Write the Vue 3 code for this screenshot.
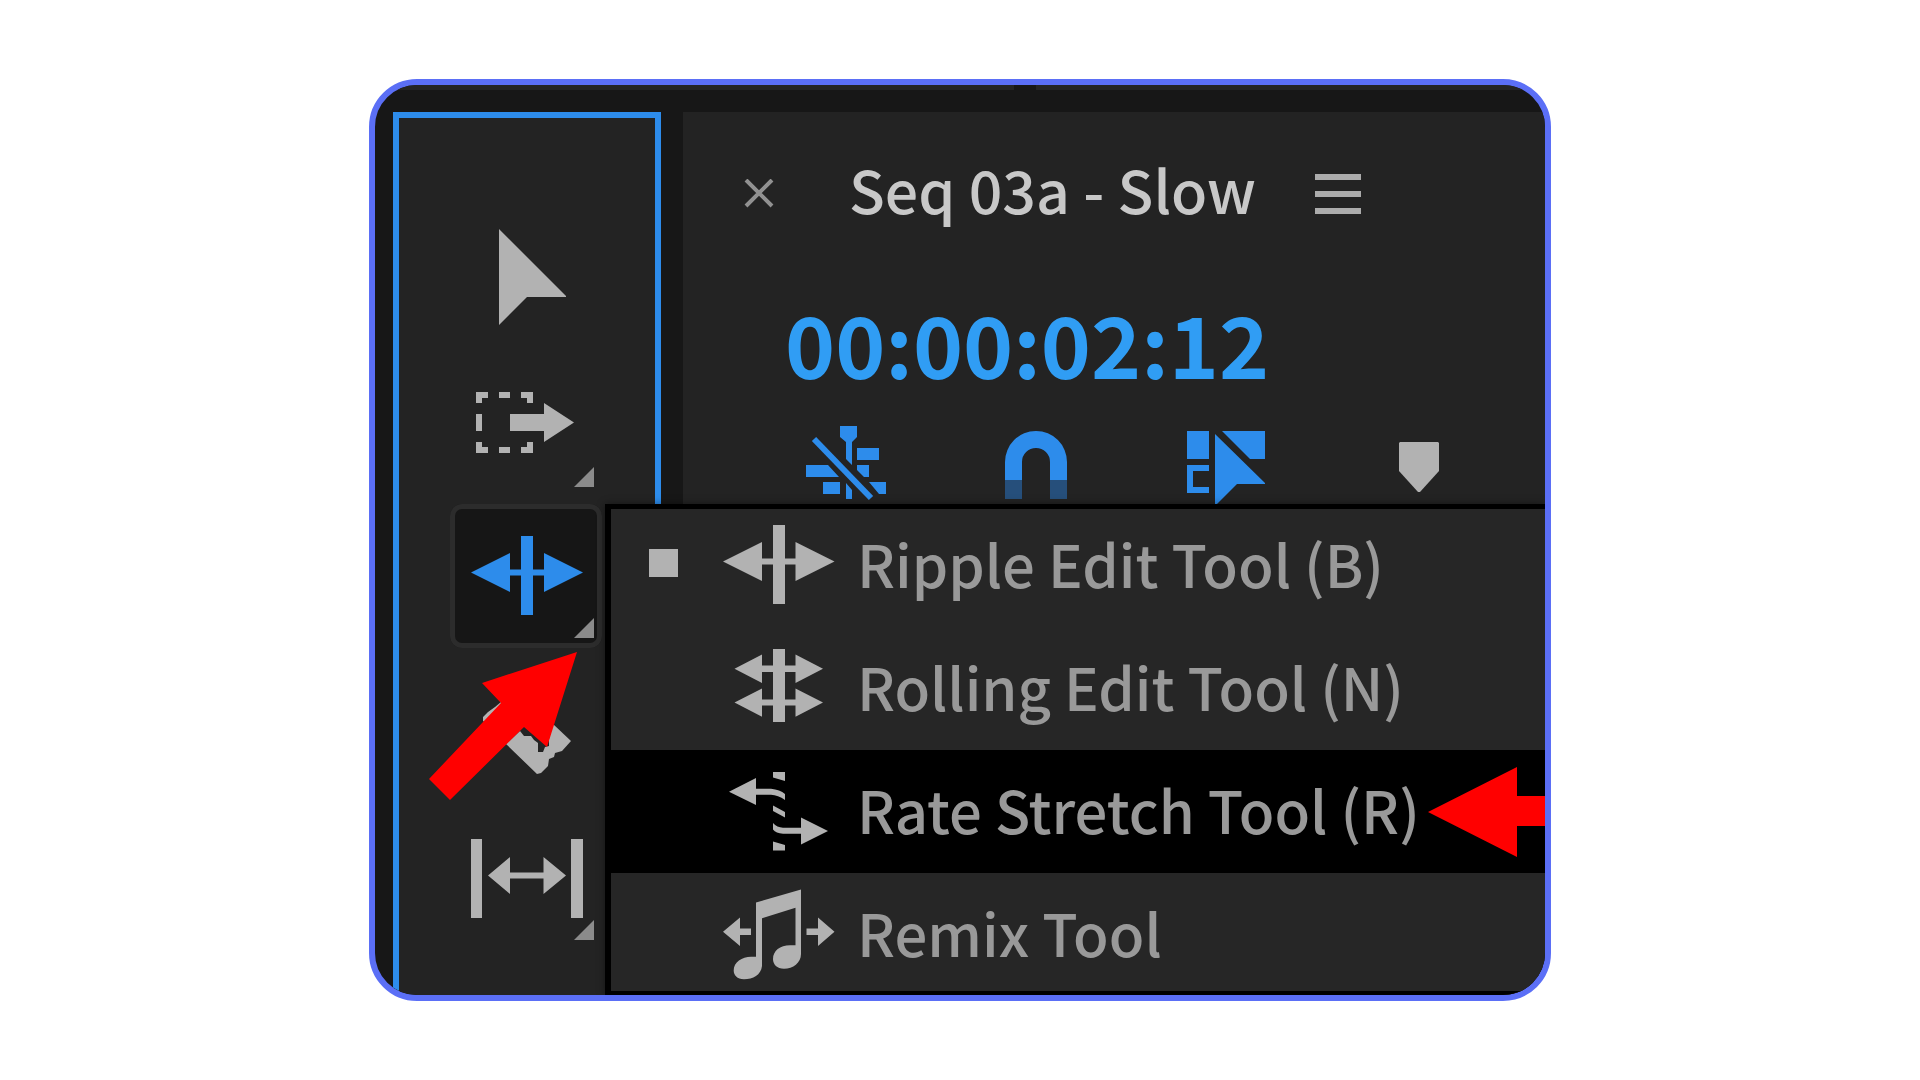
<script setup>
import { ref } from 'vue'

const activeTool = ref('ripple')
const highlighted = ref('rate')

const tools = [
  { id: 'select', label: 'Selection', flyout: false, path: 'M49 27L116 94V95H77L49 123Z' },
  {
    id: 'track',
    label: 'Track Select Forward',
    flyout: true,
    path: 'M26 39H38V45H32V50H26ZM49 39H60V45H49ZM71 39H83V50H77V45H71ZM26 61H32V78H26ZM26 89H32V94H38V100H26ZM49 94H60V100H49ZM77 89H83V100H71V94H77ZM60 61H94V50L124 69.500L94 89V78H60Z'
  },
  {
    id: 'ripple',
    label: 'Ripple Edit',
    flyout: true,
    path: 'M71 32H83V65.500H94V49L133 68.500L94 88V71.500H83V111H71V71.500H60V88L21 68.500L60 49V65.500H71Z'
  },
  {
    id: 'razor',
    label: 'Razor',
    flyout: false,
    path: 'M33 66V62L38 57L45 52L51 47V53L36 68ZM56 89L70 76L74 81H81L84 85L88 88V97H93L95 92L99 91V84L103 69L121 86L112 96L105 98L104 102L99 104L98 111L91 118L87 119Z'
  },
  {
    id: 'slip',
    label: 'Slip',
    flyout: true,
    path: 'M21 33H32V112H21ZM121 33H133V112H121ZM38 69.500L60 51V66.500H93.500V51L116 69.500L93.500 88V72.500H60V88Z'
  }
]

const menuItems = [
  {
    id: 'ripple',
    label: 'Ripple Edit Tool (B)',
    checked: true,
    path: 'M50 21H62V54.500H72.500V38L111.500 57.500L72.500 77V60.500H62V100H50V60.500H39V77L0 57.500L39 38V54.500H50Z'
  },
  {
    id: 'rolling',
    label: 'Rolling Edit Tool (N)',
    checked: false,
    path: 'M50 22H62V38.500H72.500V27.500L100 41.700L72.500 56V45H62V72.500H72.500V61.500L100 75.500L72.500 89.700V78.500H62V95H50V78.500H39V89.700L11.500 75.500L39 61.500V72.500H50V45H39V56L11.500 41.700L39 27.500V38.500H50Z'
  },
  {
    id: 'rate',
    label: 'Rate Stretch Tool (R)',
    checked: false,
    path: 'M50 22H62V31L50 27.500ZM6 41.700L33 28V38.700H48Q57 39.500 62 44V50Q55 45 48 44.700H33V55ZM50 55.500L62 62V67.500L50 61ZM50 73Q54 77.500 60 77.700H78V67.500L105 81L78 94.500V83.700H60Q53 83.500 50 79.500ZM50 91.500L62 95V100.500H50Z'
  },
  {
    id: 'remix',
    label: 'Remix Tool',
    checked: false,
    path: 'M0 58.700L17 44.500V55.500H28V62H17V73ZM83.500 55.500H95V44.500L111.500 58.700L95 73V62H83.500ZM33 29.500L78 16.500V81C78 90 70 95.700 61 95.700C54 95.700 50 91.500 50 86C50 78 57 72.300 67 72.300H72.500V34.700L39 45.300V93C38 102 30 106.300 21 106.300C14 106.300 10.700 102 10.700 97.500C10.700 89 19 83.700 28 83.700H33Z'
  }
]
</script>

<template>
  <main class="page">
    <section class="frame">
      <div class="strip"><span class="strip-left"></span><span class="strip-right"></span></div>

      <div class="workspace">
        <nav class="toolbar" aria-label="Tools">
          <button
            v-for="tool in tools"
            :key="tool.id"
            class="tool"
            :class="{ active: tool.id === activeTool }"
            :aria-label="tool.label"
            type="button"
            @click="activeTool = tool.id"
          >
            <svg viewBox="0 0 152 144" width="152" height="144" aria-hidden="true">
              <path :d="tool.path" fill="currentColor" />
              <path v-if="tool.flyout" d="M144 114V134H124Z" fill="#8b8b8b" />
            </svg>
          </button>
        </nav>

        <section class="timeline">
          <header class="tab">
            <button class="plain" type="button" aria-label="Close sequence">
              <svg viewBox="0 0 30 30" width="30" height="30" aria-hidden="true">
                <path d="M2 1L28 27M28 1L2 27" stroke="#919191" stroke-width="4" />
              </svg>
            </button>
            <h1 class="title">Seq 03a - Slow</h1>
            <button class="plain" type="button" aria-label="Panel menu">
              <svg viewBox="0 0 46 40" width="46" height="40" aria-hidden="true">
                <path d="M0 3H46M0 20H46M0 37H46" stroke="#acacac" stroke-width="6" />
              </svg>
            </button>
          </header>

          <div class="timecode">00:00:02:12</div>

          <div class="options">
            <button class="plain option" type="button" aria-label="Insert as nest">
              <svg viewBox="0 0 80 75" width="80" height="75" aria-hidden="true">
                <path
                  fill="currentColor"
                  d="M34 0H51V11L46 16V39L40 33V16L34 11ZM51 22H73V34H51ZM51 39H63V51H58L51 44ZM0 39H22L33 51H0ZM17 56H34V68H17ZM40 57L46 64V73H40ZM63 56H80V68H73Z"
                />
                <path d="M8 13L65 72" stroke="currentColor" stroke-width="6" />
              </svg>
            </button>
            <button class="plain option" type="button" aria-label="Snap">
              <svg viewBox="0 0 62 75" width="62" height="75" aria-hidden="true">
                <path fill="currentColor" d="M0 54V36A31 31 0 0 1 62 36V54H45V36A14 14 0 0 0 17 36V54Z" />
                <path fill="#264f7b" d="M0 54H17V73H0ZM45 54H62V73H45Z" />
              </svg>
            </button>
            <button class="plain option" type="button" aria-label="Linked selection">
              <svg viewBox="0 0 79 79" width="79" height="79" aria-hidden="true">
                <path
                  fill="currentColor"
                  d="M1 5H23V33H1ZM36 5H79V33H64ZM1 39H23V45H7V61H23V67H1ZM29 8L79 57V58H51L31 78H29Z"
                />
              </svg>
            </button>
            <button class="plain option marker" type="button" aria-label="Add marker">
              <svg viewBox="0 0 40 68" width="40" height="68" aria-hidden="true">
                <path fill="currentColor" d="M1 16H39L40 17V45L21 66H19L0 45V17Z" />
              </svg>
            </button>
          </div>
        </section>
      </div>

      <div class="menu" role="menu">
        <button
          v-for="item in menuItems"
          :key="item.id"
          class="item"
          :class="{ highlighted: item.id === highlighted }"
          role="menuitemradio"
          :aria-checked="item.checked"
          type="button"
          @mouseenter="highlighted = item.id"
        >
          <span class="check" :class="{ on: item.checked }"></span>
          <svg class="item-icon" viewBox="0 0 112 123" width="112" height="123" aria-hidden="true">
            <path :d="item.path" fill="currentColor" />
          </svg>
          <span class="label">{{ item.label }}</span>
        </button>
        <svg class="arrow-left" viewBox="0 0 117 92" width="117" height="92" aria-hidden="true">
          <path d="M0 46L89 1V30H117V60H89V91Z" fill="#ff0000" />
        </svg>
      </div>

      <svg class="arrow-up" viewBox="0 0 149 150" width="149" height="150" aria-hidden="true">
        <path d="M148 1L118 96L95 76L21 149L0 128L72 52L53 32Z" fill="#ff0000" />
      </svg>
    </section>
  </main>
</template>

<style>
body {
  margin: 0;
  background: #ffffff;
}
</style>

<style scoped>
.page {
  box-sizing: border-box;
  min-height: 100vh;
  padding: 79px 369px;
  display: flex;
  font-family: "Noto Sans CJK SC", "Noto Sans", sans-serif;
}

.frame {
  position: relative;
  flex: 1;
  min-width: 0;
  display: flex;
  flex-direction: column;
  overflow: hidden;
  border: 6px solid #5b6ff6;
  border-radius: 48px;
  background: #171717;
}

.strip {
  display: flex;
  gap: 22px;
  height: 5px;
}

.strip-left {
  flex: 639;
  background: #242424;
}

.strip-right {
  flex: 509;
  background: #242424;
}

.workspace {
  flex: 1;
  display: flex;
  gap: 22px;
  padding: 22px 0 0 18px;
}

.toolbar {
  box-sizing: border-box;
  width: 268px;
  display: flex;
  flex-direction: column;
  gap: 7px;
  padding: 84px 0 45px 51px;
  border: 6px solid #2d8ceb;
  border-bottom: 0;
  background: #232323;
}

.tool {
  box-sizing: border-box;
  width: 152px;
  height: 144px;
  padding: 0;
  border: 0;
  border-radius: 12px;
  background: transparent;
  color: #b2b2b2;
}

.tool svg {
  display: block;
}

.tool.active {
  background: #161616;
  box-shadow: inset 0 0 0 5px #2c2c2c;
  color: #2d8ceb;
}

.timeline {
  flex: 1;
  min-width: 0;
  background: #232323;
}

.plain {
  display: block;
  padding: 0;
  border: 0;
  background: transparent;
}

.plain svg {
  display: block;
}

.tab {
  display: flex;
  align-items: center;
  height: 80px;
  padding: 42px 0 0 61px;
}

.title {
  margin: 0 59px 0 75px;
  padding-bottom: 10px;
  font-size: 59px;
  font-weight: 500;
  line-height: 80px;
  white-space: nowrap;
  color: #c8c8c8;
}

.timecode {
  padding: 58px 0 0 102px;
  font-size: 85px;
  font-weight: 700;
  line-height: 100px;
  white-space: nowrap;
  color: #309df4;
}

.options {
  display: flex;
  align-items: flex-start;
  padding: 34px 0 0 123px;
}

.option {
  margin-right: 119px;
  color: #2d8ceb;
}

.option.marker {
  margin: 0 0 0 15px;
  color: #b2b2b2;
}

.menu {
  position: absolute;
  top: 419px;
  left: 230px;
  right: 0;
  background: #262626;
  box-shadow: inset 6px 5px 0 #000000, inset 0 -5px 0 #000000, 0 0 8px rgba(0, 0, 0, 0.4);
}

.item {
  display: flex;
  align-items: center;
  width: 100%;
  height: 123px;
  padding: 0 0 0 44px;
  border: 0;
  background: transparent;
  font-family: inherit;
  font-size: 58px;
  font-weight: 500;
  line-height: 80px;
  text-align: left;
  white-space: nowrap;
  color: #999999;
}

.item.highlighted {
  background: #000000;
}

.check {
  width: 29px;
  height: 28px;
  margin: 0 45px 6px 0;
}

.check.on {
  background: #b2b2b2;
}

.item-icon {
  flex: none;
  color: #b2b2b2;
}

.label {
  margin-left: 22px;
  padding-bottom: 6px;
}

.arrow-left {
  position: absolute;
  top: 262px;
  right: 0;
}

.arrow-up {
  position: absolute;
  top: 566px;
  left: 54px;
}
</style>
